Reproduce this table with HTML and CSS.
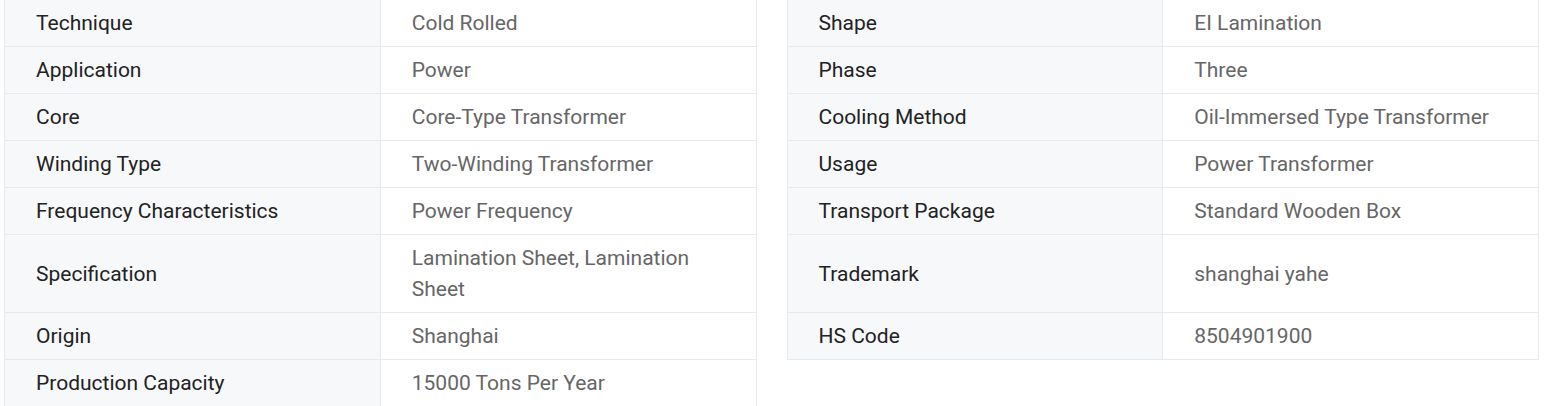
FILE: index.html
```html
<!DOCTYPE html>
<html>
<head>
<meta charset="utf-8">
<link rel="stylesheet" href="styles.css">
</head>
<body>
<div class="grid">
  <div class="pair top"><div class="k">Technique</div><div class="v">Cold Rolled</div></div>
  <div class="pair top"><div class="k">Shape</div><div class="v">EI Lamination</div></div>
  <div class="pair"><div class="k">Application</div><div class="v">Power</div></div>
  <div class="pair"><div class="k">Phase</div><div class="v">Three</div></div>
  <div class="pair"><div class="k">Core</div><div class="v">Core-Type Transformer</div></div>
  <div class="pair"><div class="k">Cooling Method</div><div class="v">Oil-Immersed Type Transformer</div></div>
  <div class="pair"><div class="k">Winding Type</div><div class="v">Two-Winding Transformer</div></div>
  <div class="pair"><div class="k">Usage</div><div class="v">Power Transformer</div></div>
  <div class="pair"><div class="k">Frequency Characteristics</div><div class="v">Power Frequency</div></div>
  <div class="pair"><div class="k">Transport Package</div><div class="v">Standard Wooden Box</div></div>
  <div class="pair"><div class="k">Specification</div><div class="v">Lamination Sheet, Lamination Sheet</div></div>
  <div class="pair"><div class="k">Trademark</div><div class="v">shanghai yahe</div></div>
  <div class="pair"><div class="k">Origin</div><div class="v">Shanghai</div></div>
  <div class="pair"><div class="k">HS Code</div><div class="v">8504901900</div></div>
  <div class="pair"><div class="k">Production Capacity</div><div class="v">15000 Tons Per Year</div></div>
</div>
</body>
</html>
```
FILE: styles.css
```css
html, body {
  margin: 0;
  padding: 0;
  background: #ffffff;
}
body {
  font-family: Roboto, "Liberation Sans", sans-serif;
}
.grid {
  display: grid;
  grid-template-columns: 1fr 1fr;
  column-gap: 30px;
  align-items: stretch;
  padding: 0 6px 0 4px;
  margin-top: -1px;
}
.pair {
  display: grid;
  grid-template-columns: 1fr 1fr;
  border-left: 1px solid #e6eaef;
}
.pair.top {
  border-top: 1px solid #e6eaef;
}
.k,
.v {
  display: flex;
  align-items: center;
  border-right: 1px solid #e6eaef;
  border-bottom: 1px solid #e6eaef;
  font-size: 21px;
  line-height: 31px;
  padding: 8px 30px 7px 31px;
  min-width: 0;
}
.k {
  background: #f7f8fa;
  color: #222222;
}
.v {
  background: #ffffff;
  color: #666666;
}
```
